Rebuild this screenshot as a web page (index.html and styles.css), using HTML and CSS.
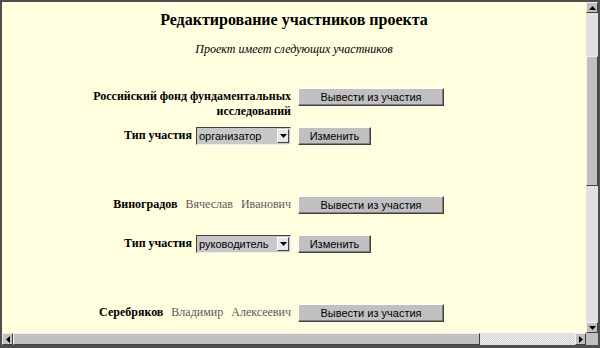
FILE: index.html
```html
<!DOCTYPE html>
<html lang="ru">
<head>
    <meta charset="UTF-8">
    <title>Редактирование участников проекта</title>
    <link rel="stylesheet" href="styles.css">
</head>
<body>
    <div class="window">
        <div class="page">
            <h1>Редактирование участников проекта</h1>
            <p class="subtitle">Проект имеет следующих участников</p>

            <div class="member">
                <div class="member-row">
                    <div class="label">Российский фонд фундаментальных исследований</div>
                    <div class="cell"><button class="btn btn-wide">Вывести из участия</button></div>
                </div>
                <div class="type-row">
                    <div class="type-cell">
                        <span class="type-label">Тип участия</span>
                        <div class="select"><span class="select-value">организатор</span><span class="select-arrow"><svg width="7" height="4" viewBox="0 0 7 4"><path d="M0 0h7L3.5 4z" fill="#000"/></svg></span></div>
                    </div>
                    <div class="cell"><button class="btn btn-small">Изменить</button></div>
                </div>
            </div>

            <div class="member">
                <div class="member-row">
                    <div class="label">Виноградов <span class="given">Вячеслав</span> <span class="given">Иванович</span></div>
                    <div class="cell"><button class="btn btn-wide">Вывести из участия</button></div>
                </div>
                <div class="type-row">
                    <div class="type-cell">
                        <span class="type-label">Тип участия</span>
                        <div class="select"><span class="select-value">руководитель</span><span class="select-arrow"><svg width="7" height="4" viewBox="0 0 7 4"><path d="M0 0h7L3.5 4z" fill="#000"/></svg></span></div>
                    </div>
                    <div class="cell"><button class="btn btn-small">Изменить</button></div>
                </div>
            </div>

            <div class="member">
                <div class="member-row">
                    <div class="label">Серебряков <span class="given">Владимир</span> <span class="given">Алексеевич</span></div>
                    <div class="cell"><button class="btn btn-wide">Вывести из участия</button></div>
                </div>
            </div>
        </div>

        <div class="vscroll">
            <div class="sb-btn"><svg width="7" height="4" viewBox="0 0 7 4"><path d="M3.5 0L7 4H0z" fill="#000"/></svg></div>
            <div class="sb-track sb-track-top"></div>
            <div class="sb-thumb sb-thumb-v"></div>
            <div class="sb-track sb-fill"></div>
            <div class="sb-btn"><svg width="7" height="4" viewBox="0 0 7 4"><path d="M0 0h7L3.5 4z" fill="#000"/></svg></div>
        </div>

        <div class="hscroll">
            <div class="sb-btn"><svg width="4" height="7" viewBox="0 0 4 7"><path d="M0 3.5L4 0v7z" fill="#000"/></svg></div>
            <div class="sb-thumb sb-thumb-h"></div>
            <div class="sb-track sb-fill"></div>
            <div class="sb-btn"><svg width="4" height="7" viewBox="0 0 4 7"><path d="M4 3.5L0 0v7z" fill="#000"/></svg></div>
        </div>

        <div class="corner"></div>
    </div>
</body>
</html>
```

FILE: styles.css
```css
body {
    margin: 0;
    padding: 0;
    font-family: "Liberation Serif", "Times New Roman", serif;
    color: #000;
}

.window {
    width: 600px;
    height: 348px;
    box-sizing: border-box;
    border-style: solid;
    border-color: #4d4d4d;
    border-width: 2px 2px 3px 2px;
    display: grid;
    grid-template-columns: 1fr 12px;
    grid-template-rows: 1fr 12px;
    overflow: hidden;
}

.page {
    background-color: #ffffe0;
    overflow: hidden;
}

h1 {
    margin: 7px 0 0 0;
    font-size: 16px;
    line-height: 22px;
    text-align: center;
}

.subtitle {
    margin: 10px 0 0 0;
    font-size: 12px;
    line-height: 16px;
    font-style: italic;
    text-align: center;
}

.member:first-of-type {
    margin-top: 30px;
}

.member + .member {
    margin-top: 51px;
}

.member-row,
.type-row {
    display: grid;
    grid-template-columns: 220px auto;
    column-gap: 7px;
    padding-left: 69px;
}

.member-row {
    min-height: 39px;
    align-items: start;
}

.label {
    font-size: 12px;
    line-height: 15px;
    font-weight: bold;
    text-align: right;
    padding-top: 2px;
}

.given {
    font-weight: normal;
    color: #5a5a5a;
    margin-left: 5px;
}

.type-row {
    height: 18px;
    align-items: center;
}

.type-cell {
    display: flex;
    justify-content: flex-end;
    align-items: center;
    gap: 4px;
}

.type-label {
    font-size: 12px;
    font-weight: bold;
}

.select {
    width: 95px;
    height: 18px;
    box-sizing: border-box;
    display: flex;
    align-items: center;
    background-color: #c8c8c8;
    border: 1px solid;
    border-color: #404040 #f0f0f0 #f0f0f0 #404040;
}

.select-value {
    flex: 1;
    padding-left: 2px;
    font-family: "Liberation Sans", Arial, sans-serif;
    font-size: 11px;
}

.select-arrow {
    width: 12px;
    height: 14px;
    box-sizing: border-box;
    margin-right: 1px;
    display: flex;
    align-items: center;
    justify-content: center;
    background-color: #e8e8e8;
    border: 1px solid;
    border-color: #fff #404040 #404040 #fff;
}

.btn {
    height: 18px;
    box-sizing: border-box;
    padding: 0;
    font-family: "Liberation Sans", Arial, sans-serif;
    font-size: 11px;
    color: #000;
    background-color: #c0c0c0;
    border: 1px solid;
    border-color: #fff #404040 #404040 #fff;
    box-shadow: inset -1px -1px 0 #808080;
}

.btn-wide {
    width: 146px;
}

.btn-small {
    width: 73px;
}

.vscroll,
.hscroll {
    display: flex;
    background-color: #e0e0e0;
}

.vscroll {
    flex-direction: column;
}

.sb-btn {
    flex: 0 0 11px;
    display: flex;
    align-items: center;
    justify-content: center;
    box-sizing: border-box;
    background-color: #c0c0c0;
    border: 1px solid;
    border-color: #f0f0f0 #404040 #404040 #f0f0f0;
}

.sb-track {
    background-color: #e0e0e0;
    background-image: repeating-conic-gradient(#eaeaea 0 25%, #d6d6d6 0 50%);
    background-size: 2px 2px;
}

.sb-track-top {
    flex: 0 0 43px;
}

.sb-fill {
    flex: 1;
}

.sb-thumb {
    box-sizing: border-box;
    background-color: #c0c0c0;
    border: 1px solid;
    border-color: #f0f0f0 #404040 #404040 #f0f0f0;
}

.sb-thumb-v {
    flex: 0 0 130px;
}

.sb-thumb-h {
    flex: 0 0 467px;
}

.corner {
    background-color: #c0c0c0;
}
```
